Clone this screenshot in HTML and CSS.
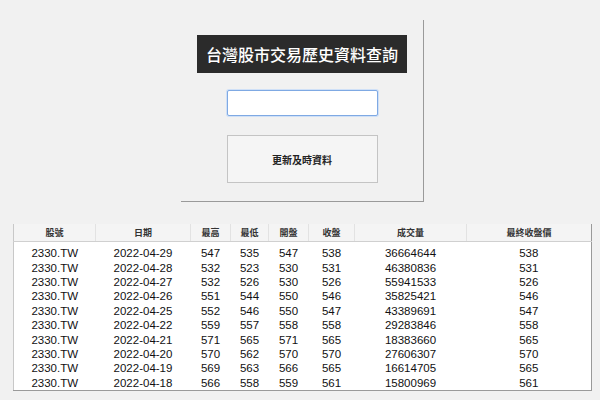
FILE: index.html
```html
<!DOCTYPE html>
<html lang="zh-Hant">
<head>
    <meta charset="UTF-8">
    <meta name="viewport" content="width=device-width, initial-scale=1.0">
    <title>台灣股市交易歷史資料查詢</title>
    <link rel="stylesheet" href="styles.css">
</head>
<body>
    <div class="panel">
        <div class="title">台灣股市交易歷史資料查詢</div>
        <input type="text" class="code-input" id="code">
        <button class="update-btn">更新及時資料</button>
    </div>

    <div class="table-wrap">
        <table class="stock-table">
            <colgroup>
                <col class="c-code"><col class="c-date"><col class="c-num"><col class="c-num2">
                <col class="c-num"><col class="c-close"><col class="c-vol"><col class="c-adj">
            </colgroup>
            <thead>
                <tr>
                    <th>股號</th><th>日期</th><th>最高</th><th>最低</th>
                    <th>開盤</th><th>收盤</th><th>成交量</th><th>最終收盤價</th>
                </tr>
            </thead>
            <tbody>
                <tr class="first"><td>2330.TW</td><td>2022-04-29</td><td>547</td><td>535</td><td>547</td><td>538</td><td>36664644</td><td>538</td></tr>
                <tr><td>2330.TW</td><td>2022-04-28</td><td>532</td><td>523</td><td>530</td><td>531</td><td>46380836</td><td>531</td></tr>
                <tr><td>2330.TW</td><td>2022-04-27</td><td>532</td><td>526</td><td>530</td><td>526</td><td>55941533</td><td>526</td></tr>
                <tr><td>2330.TW</td><td>2022-04-26</td><td>551</td><td>544</td><td>550</td><td>546</td><td>35825421</td><td>546</td></tr>
                <tr><td>2330.TW</td><td>2022-04-25</td><td>552</td><td>546</td><td>550</td><td>547</td><td>43389691</td><td>547</td></tr>
                <tr><td>2330.TW</td><td>2022-04-22</td><td>559</td><td>557</td><td>558</td><td>558</td><td>29283846</td><td>558</td></tr>
                <tr><td>2330.TW</td><td>2022-04-21</td><td>571</td><td>565</td><td>571</td><td>565</td><td>18383660</td><td>565</td></tr>
                <tr><td>2330.TW</td><td>2022-04-20</td><td>570</td><td>562</td><td>570</td><td>570</td><td>27606307</td><td>570</td></tr>
                <tr><td>2330.TW</td><td>2022-04-19</td><td>569</td><td>563</td><td>566</td><td>565</td><td>16614705</td><td>565</td></tr>
                <tr><td>2330.TW</td><td>2022-04-18</td><td>566</td><td>558</td><td>559</td><td>561</td><td>15800969</td><td>561</td></tr>
            </tbody>
        </table>
    </div>
</body>
</html>
```

FILE: styles.css
```css
body {
    margin: 0;
    padding: 0;
    background: #f1f1f1;
    font-family: "Liberation Sans", "Noto Sans CJK TC", sans-serif;
    color: #111;
}
.panel {
    width: 243px;
    height: 182px;
    margin: 20px 0 0 181px;
    padding-top: 15px;
    box-sizing: border-box;
    border-right: 1px solid #9a9a9a;
    border-bottom: 1px solid #9a9a9a;
    display: flex;
    flex-direction: column;
    align-items: center;
}
.title {
    height: 38px;
    line-height: 38px;
    padding: 0 9px;
    background: #2b2b2b;
    color: #fff;
    font-family: "Noto Sans CJK TC", sans-serif;
    font-size: 16px;
    font-weight: 500;
    white-space: nowrap;
}
.code-input {
    margin-top: 17px;
    width: 151px;
    height: 26px;
    box-sizing: border-box;
    border: 1px solid #7fa9e3;
    border-radius: 2px;
    background: #fff;
    outline: none;
    padding: 0 4px;
    box-shadow: 0 0 0 1px #cfe0f7;
}
.update-btn {
    margin-top: 19px;
    width: 151px;
    height: 48px;
    border: 1px solid #c4c4c4;
    background: #f5f5f5;
    font-family: "Noto Sans CJK TC", serif;
    font-size: 10px;
    font-weight: bold;
    color: #222;
    cursor: pointer;
}
.table-wrap {
    margin: 22px 0 0 13px;
    width: 578px;
}
.stock-table {
    width: 578px;
    table-layout: fixed;
    border-collapse: collapse;
    background: #fff;
    border-left: 1px solid #c8c8c8;
    border-right: 1px solid #9a9a9a;
    border-bottom: 1px solid #9a9a9a;
}
.c-code { width: 82px; }
.c-date { width: 95px; }
.c-num { width: 40px; }
.c-num2 { width: 38px; }
.c-close { width: 46px; }
.c-vol { width: 112px; }
.c-adj { width: 125px; }
.stock-table th {
    height: 17px;
    padding: 0;
    background: #f4f4f4;
    border-bottom: 1px solid #d0d0d0;
    border-left: 1px solid #e2e2e2;
    font-family: "Noto Sans CJK TC", sans-serif;
    font-size: 9px;
    font-weight: bold;
    color: #333;
    text-align: center;
}
.stock-table th:first-child {
    border-left: none;
}
.stock-table td {
    height: 14.4px;
    padding: 0;
    font-size: 11.5px;
    line-height: 14px;
    text-align: center;
}
.stock-table tr.first td {
    padding-top: 4px;
}
```
